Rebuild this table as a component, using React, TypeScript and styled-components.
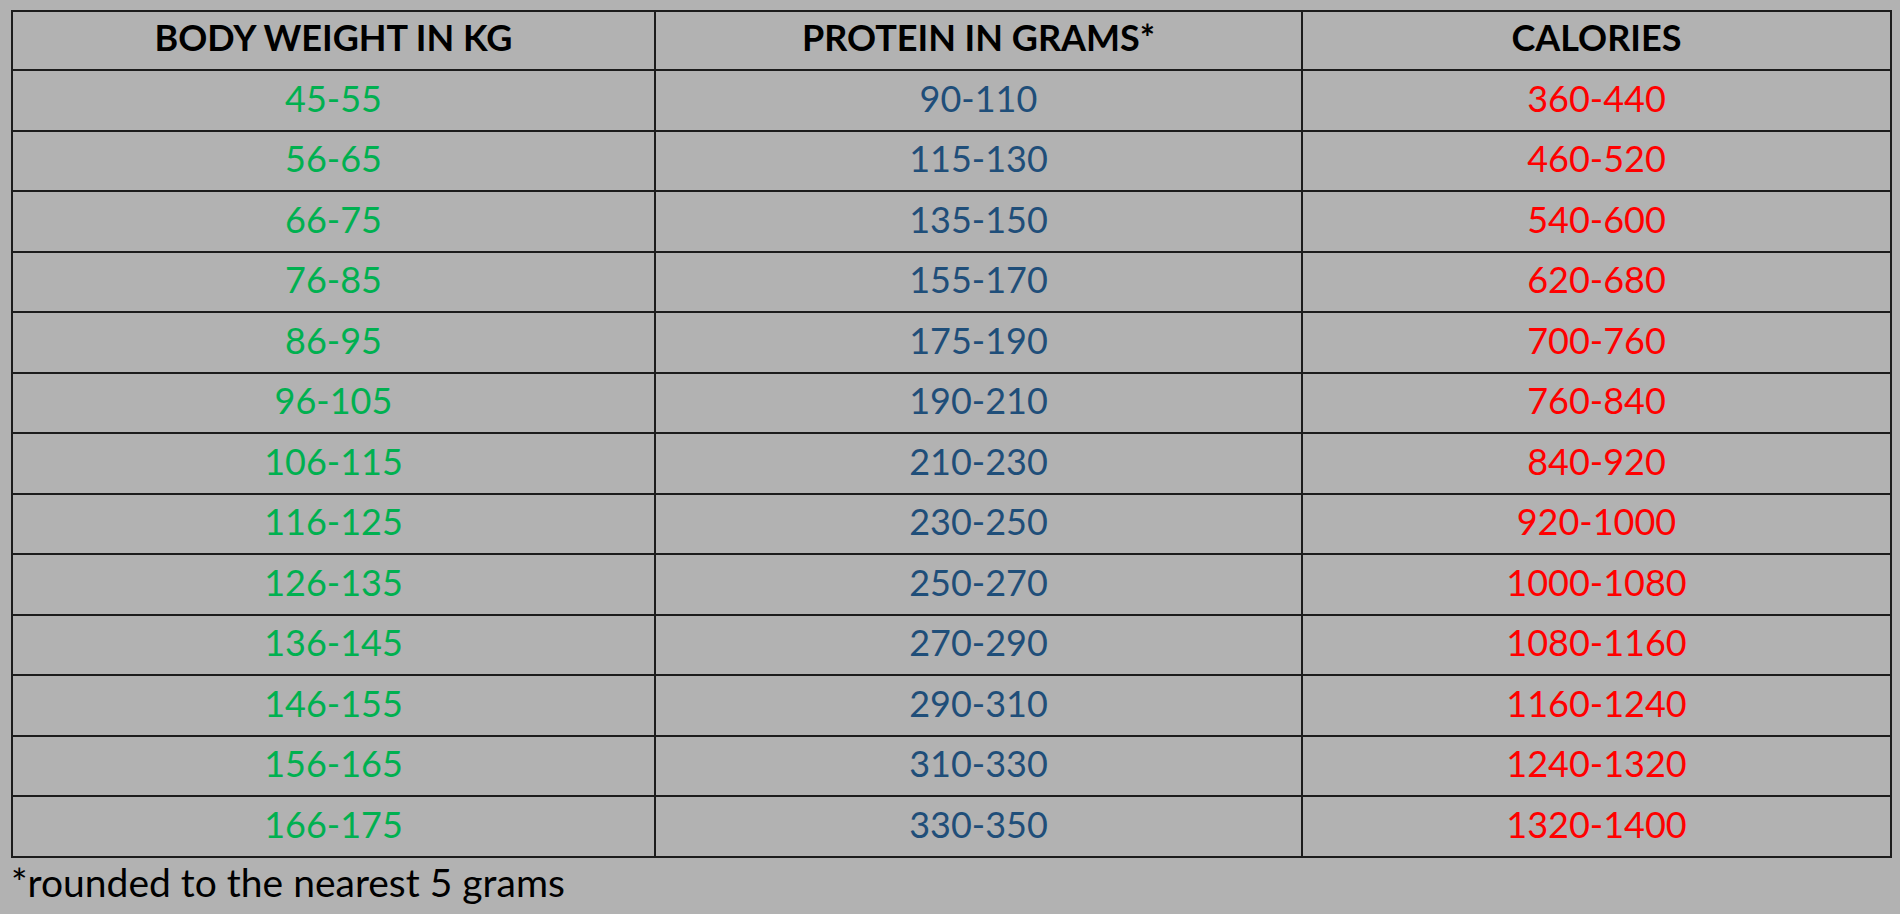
import React, {FC} from 'react';
import styled, {createGlobalStyle} from 'styled-components';

type Tone = 'green' | 'blue' | 'red';

interface Row {
  weight: string;
  protein: string;
  calories: string;
}

const rows: Row[] = [
  {weight: '45-55', protein: '90-110', calories: '360-440'},
  {weight: '56-65', protein: '115-130', calories: '460-520'},
  {weight: '66-75', protein: '135-150', calories: '540-600'},
  {weight: '76-85', protein: '155-170', calories: '620-680'},
  {weight: '86-95', protein: '175-190', calories: '700-760'},
  {weight: '96-105', protein: '190-210', calories: '760-840'},
  {weight: '106-115', protein: '210-230', calories: '840-920'},
  {weight: '116-125', protein: '230-250', calories: '920-1000'},
  {weight: '126-135', protein: '250-270', calories: '1000-1080'},
  {weight: '136-145', protein: '270-290', calories: '1080-1160'},
  {weight: '146-155', protein: '290-310', calories: '1160-1240'},
  {weight: '156-165', protein: '310-330', calories: '1240-1320'},
  {weight: '166-175', protein: '330-350', calories: '1320-1400'},
];

const toneColor: Record<Tone, string> = {
  green: '#00b050',
  blue: '#1f4e79',
  red: '#ff0000',
};

const App: FC = () => (
  <>
    <GlobalStyle />
    <Page>
      <Table>
        <colgroup>
          <col style={{width: 643}} />
          <col style={{width: 647}} />
          <col style={{width: 589}} />
        </colgroup>
        <thead>
          <tr>
            <HeadCell>BODY WEIGHT IN KG</HeadCell>
            <HeadCell>PROTEIN IN GRAMS*</HeadCell>
            <HeadCell>CALORIES</HeadCell>
          </tr>
        </thead>
        <tbody>
          {rows.map(row => (
            <tr key={row.weight}>
              <Cell tone="green">{row.weight}</Cell>
              <Cell tone="blue">{row.protein}</Cell>
              <Cell tone="red">{row.calories}</Cell>
            </tr>
          ))}
        </tbody>
      </Table>
      <Footnote>*rounded to the nearest 5 grams</Footnote>
    </Page>
  </>
);

export default App;

const GlobalStyle = createGlobalStyle`
  html, body {
    margin: 0;
    padding: 0;
    background: #b2b2b2;
  }
  body {
    font-family: Lato, "Open Sans", "Liberation Sans", sans-serif;
  }
`;

const Page = styled.div`
  width: 1900px;
  height: 914px;
  box-sizing: border-box;
  padding: 10px 10px 0 11px;
  background: #b2b2b2;
  overflow: hidden;
`;

const Table = styled.table`
  width: 1879px;
  border-collapse: collapse;
  table-layout: fixed;
`;

const HeadCell = styled.th`
  box-sizing: border-box;
  height: 59px;
  padding: 0 0 7px;
  border: 2px solid #1c1c1c;
  color: #000;
  font-size: 36px;
  line-height: 1;
  font-weight: 700;
  text-align: center;
  vertical-align: middle;
`;

const Cell = styled.td<{tone: Tone}>`
  box-sizing: border-box;
  height: 60.5px;
  padding: 0 0 5px;
  border: 2px solid #1c1c1c;
  color: ${props => toneColor[props.tone]};
  font-size: 36px;
  line-height: 1;
  text-align: center;
  vertical-align: middle;
`;

const Footnote = styled.p`
  margin: 1px 0 0;
  color: #000;
  font-size: 39px;
  line-height: 46px;
`;
